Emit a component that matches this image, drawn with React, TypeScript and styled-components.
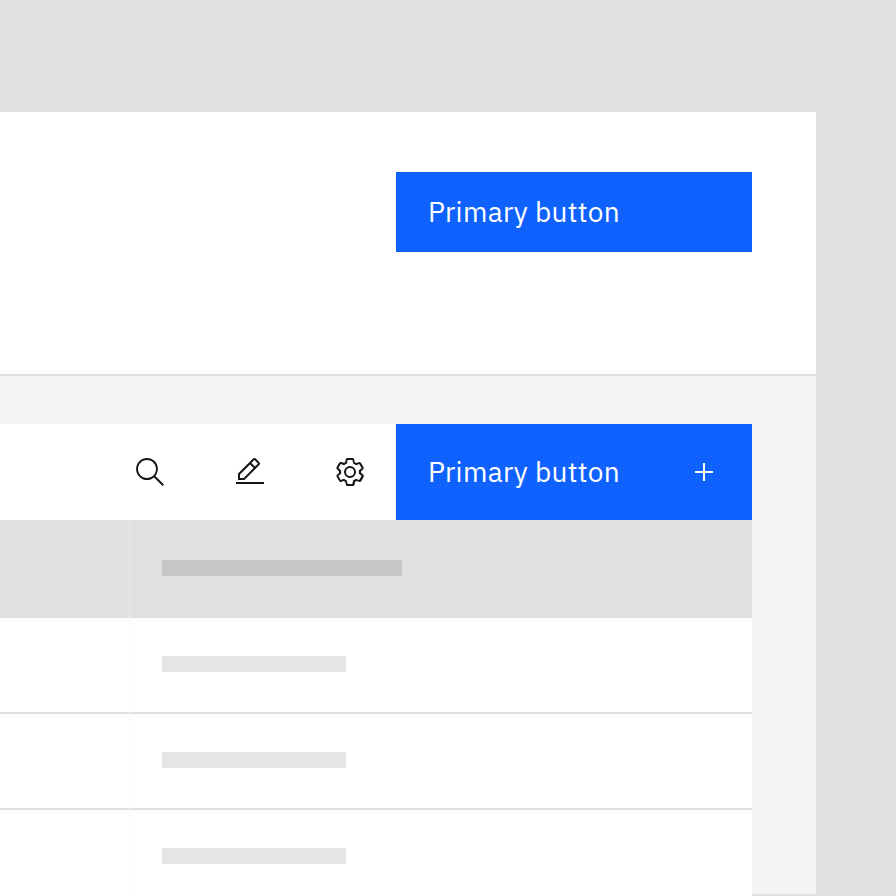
import React from "react";
import styled, { createGlobalStyle } from "styled-components";

const GlobalStyle = createGlobalStyle`
  *, *::before, *::after { box-sizing: border-box; }
  body { margin: 0; background: #e0e0e0; overflow: hidden; }
`;

const Stage = styled.div`
  width: 896px;
  height: 896px;
  padding-top: 112px;
  overflow: hidden;
  background: #e0e0e0;
`;

const Page = styled.main`
  width: 816px;
  height: 782px;
  background: #f4f4f4;
`;

const PageHeader = styled.header`
  display: flex;
  justify-content: flex-end;
  align-items: flex-start;
  height: 264px;
  padding: 60px 64px 0 0;
  background: #ffffff;
  border-bottom: 2px solid #e0e0e0;
`;

const Button = styled.button<{ $tall?: boolean }>`
  display: flex;
  flex: none;
  align-items: center;
  justify-content: space-between;
  width: 356px;
  height: ${(p) => (p.$tall ? 96 : 80)}px;
  margin: 0;
  padding: 0 32px;
  border: 0;
  border-radius: 0;
  background: #0f62fe;
  color: #ffffff;
  font-family: "IBM Plex Sans", Roboto, sans-serif;
  font-size: 28px;
  line-height: 36px;
  letter-spacing: 0.32px;
  white-space: nowrap;
`;

const DataTable = styled.section`
  width: 752px;
  margin-top: 48px;
`;

const Toolbar = styled.div`
  display: flex;
  justify-content: flex-end;
  height: 96px;
  background: #ffffff;
`;

const ToolbarAction = styled.button<{ $last?: boolean }>`
  display: flex;
  align-items: center;
  justify-content: center;
  width: ${(p) => (p.$last ? 96 : 100)}px;
  height: 96px;
  padding: 0 0 0 ${(p) => (p.$last ? 4 : 0)}px;
  border: 0;
  background: transparent;
  color: #161616;
`;

const Icon = styled.svg`
  display: block;
  flex: none;
  width: 32px;
  height: 32px;
  fill: currentColor;
`;

const Row = styled.div<{ $head?: boolean }>`
  display: grid;
  grid-template-columns: 129px 1px 1fr;
  height: ${(p) => (p.$head ? 98 : 96)}px;
  background: ${(p) =>
    p.$head ? "#e0e0e0" : "linear-gradient(#ffffff 94px, #e0e0e0 94px)"};
`;

const Divider = styled.div<{ $head?: boolean }>`
  grid-column: 2;
  background: ${(p) =>
    p.$head
      ? "linear-gradient(#e8e8e8 96px, #fafafa 96px)"
      : "linear-gradient(#fbfbfb 94px, #f6f6f6 94px)"};
`;

const Cell = styled.div<{ $head?: boolean }>`
  padding: ${(p) => (p.$head ? 40 : 38)}px 0 0 32px;
`;

const Placeholder = styled.div<{ $head?: boolean }>`
  width: ${(p) => (p.$head ? 240 : 184)}px;
  height: 16px;
  background: ${(p) => (p.$head ? "#c6c6c6" : "#e5e5e5")};
`;

function TableRow({ head }: { head?: boolean }) {
  return (
    <Row $head={head}>
      <Divider $head={head} />
      <Cell $head={head}>
        <Placeholder $head={head} />
      </Cell>
    </Row>
  );
}

export default function App() {
  return (
    <>
      <GlobalStyle />
      <Stage>
        <Page>
          <PageHeader>
            <Button>Primary button</Button>
          </PageHeader>
          <DataTable>
            <Toolbar>
              <ToolbarAction aria-label="Search">
                <Icon viewBox="0 0 16 16">
                  <path d="M15,14.3L10.7,10c1.9-2.3,1.6-5.8-0.7-7.7S4.2,0.7,2.3,3S0.7,8.8,3,10.7c2,1.7,5,1.7,7,0l4.3,4.3L15,14.3z M2,6.5C2,4,4,2,6.5,2S11,4,11,6.5S9,11,6.5,11S2,9,2,6.5z" />
                </Icon>
              </ToolbarAction>
              <ToolbarAction aria-label="Edit">
                <Icon viewBox="0 0 32 32">
                  <path d="M2 26H30V28H2zM25.4 9c.8-.8.8-2 0-2.8l-3.6-3.6c-.8-.8-2-.8-2.8 0l-15 15V24h6.4L25.4 9zM20.4 4L24 7.6l-3 3L17.4 7 20.4 4zM6 22v-3.6l10-10 3.6 3.6-10 10H6z" />
                </Icon>
              </ToolbarAction>
              <ToolbarAction aria-label="Settings" $last>
                <Icon viewBox="0 0 16 16" fillRule="evenodd">
                  <path d="M13.5,8.4c0-0.1,0-0.3,0-0.4c0-0.1,0-0.3,0-0.4l1-0.8c0.4-0.3,0.4-0.9,0.2-1.3l-1.2-2C13.3,3.2,13,3,12.6,3c-0.1,0-0.2,0-0.3,0.1l-1.2,0.4c-0.2-0.1-0.4-0.3-0.7-0.4l-0.3-1.3C10.1,1.3,9.7,1,9.2,1H6.8c-0.5,0-0.9,0.3-1,0.8L5.6,3.1C5.3,3.2,5.1,3.3,4.9,3.4L3.7,3C3.6,3,3.5,3,3.4,3C3,3,2.7,3.2,2.5,3.5l-1.2,2C1.1,5.9,1.2,6.4,1.6,6.8l0.9,0.9c0,0.1,0,0.3,0,0.4c0,0.1,0,0.3,0,0.4L1.6,9.2c-0.4,0.3-0.5,0.9-0.2,1.3l1.2,2C2.7,12.8,3,13,3.4,13c0.1,0,0.2,0,0.3-0.1l1.2-0.4c0.2,0.1,0.4,0.3,0.7,0.4l0.3,1.3c0.1,0.5,0.5,0.8,1,0.8h2.4c0.5,0,0.9-0.3,1-0.8l0.3-1.3c0.2-0.1,0.4-0.2,0.7-0.4l1.2,0.4c0.1,0,0.2,0.1,0.3,0.1c0.4,0,0.7-0.2,0.9-0.5l1.1-2c0.2-0.4,0.2-0.9-0.2-1.3L13.5,8.4z M12.6,12l-1.7-0.6c-0.4,0.3-0.9,0.6-1.4,0.8L9.2,14H6.8l-0.4-1.8c-0.5-0.2-0.9-0.5-1.4-0.8L3.4,12l-1.2-2l1.4-1.2c-0.1-0.5-0.1-1.1,0-1.6L2.2,6l1.2-2l1.7,0.6C5.5,4.2,6,4,6.5,3.8L6.8,2h2.4l0.4,1.8c0.5,0.2,0.9,0.5,1.4,0.8L12.6,4l1.2,2l-1.4,1.2c0.1,0.5,0.1,1.1,0,1.6l1.4,1.2L12.6,12z" />
                  <circle cx="8" cy="8" r="2.5" fill="none" stroke="currentColor" />
                </Icon>
              </ToolbarAction>
              <Button $tall>
                Primary button
                <Icon viewBox="0 0 32 32">
                  <path d="M17 15V7h-2v8H7v2h8v8h2v-8h8v-2z" />
                </Icon>
              </Button>
            </Toolbar>
            <TableRow head />
            <TableRow />
            <TableRow />
            <TableRow />
          </DataTable>
        </Page>
      </Stage>
    </>
  );
}
